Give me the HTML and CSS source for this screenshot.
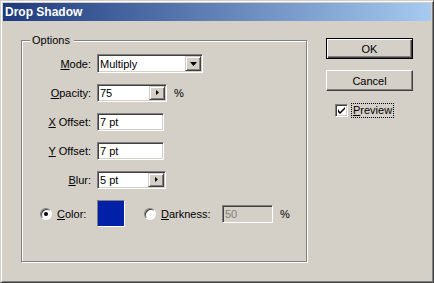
FILE: index.html
```html
<!DOCTYPE html>
<html lang="en">
<head>
  <meta charset="UTF-8">
  <title>Drop Shadow</title>
  <link rel="stylesheet" href="styles.css">
</head>
<body>
  <div class="window">
    <div class="titlebar">Drop Shadow</div>
    <div class="content">
      <fieldset class="group">
        <legend>Options</legend>
        <div class="row">
          <span class="label"><u>M</u>ode:</span>
          <div class="field select">
            <span>Multiply</span>
            <span class="mini drop"><svg width="7" height="4"><path d="M0 0h7L3.5 4z"/></svg></span>
          </div>
        </div>
        <div class="row">
          <span class="label"><u>O</u>pacity:</span>
          <div class="field w70">
            <span>75</span>
            <span class="mini spin"><svg width="3" height="5"><path d="M0 0v5l3-2.5z"/></svg></span>
          </div>
          <span class="unit">%</span>
        </div>
        <div class="row">
          <span class="label"><u>X</u> Offset:</span>
          <div class="field w67"><span>7 pt</span></div>
        </div>
        <div class="row">
          <span class="label"><u>Y</u> Offset:</span>
          <div class="field w67"><span>7 pt</span></div>
        </div>
        <div class="row">
          <span class="label"><u>B</u>lur:</span>
          <div class="field w69">
            <span>5 pt</span>
            <span class="mini spin"><svg width="3" height="5"><path d="M0 0v5l3-2.5z"/></svg></span>
          </div>
        </div>
        <div class="row color-row">
          <label class="opt color-opt"><span class="radio on"></span><span><u>C</u>olor:</span></label>
          <div class="swatch"></div>
          <label class="opt dark-opt"><span class="radio"></span><span><u>D</u>arkness:</span></label>
          <div class="field disabled w51"><span>50</span></div>
          <span class="unit">%</span>
        </div>
      </fieldset>
      <div class="buttons">
        <div class="btn default">OK</div>
        <div class="btn">Cancel</div>
        <label class="check">
          <span class="box"><svg width="7" height="7"><path d="M0 2v3l2 2 5-5V0L2 5z"/></svg></span>
          <span class="focus"><u>P</u>review</span>
        </label>
      </div>
    </div>
  </div>
</body>
</html>
```

FILE: styles.css
```css
body {
  margin: 0;
  background: #d4d0c8;
  font: 11px "Liberation Sans", Arial, sans-serif;
  color: #000;
}
.window {
  width: 434px;
  height: 283px;
  box-sizing: border-box;
  padding: 2px;
  background: #d4d0c8;
  border: 1px solid;
  border-color: #d4d0c8 #404040 #404040 #d4d0c8;
  box-shadow: inset 1px 1px #fff, inset -1px -1px #808080;
}
.titlebar {
  height: 18px;
  line-height: 18px;
  padding-left: 2px;
  background: linear-gradient(90deg, #1e3a7e, #a6caf0);
  color: #fff;
  font-weight: bold;
  font-size: 12px;
}
.content {
  display: flex;
  align-items: flex-start;
}
.group {
  margin: 13px 0 0 18px;
  padding: 2px 0 33px 0;
  width: 286px;
  box-sizing: border-box;
  min-width: 0;
  border: 1px solid #808080;
  box-shadow: 1px 1px #fff, inset 1px 1px #fff;
}
.group legend {
  margin-left: 8px;
  padding: 0 4px 0 2px;
  line-height: 13px;
  background: #d4d0c8;
}
.row {
  display: flex;
  align-items: center;
  height: 29px;
}
.label {
  width: 69px;
  margin-right: 6px;
  text-align: right;
}
.field {
  height: 18px;
  box-sizing: border-box;
  display: flex;
  align-items: center;
  padding-left: 2px;
  background: #fff;
  border: 1px solid;
  border-color: #808080 #fff #fff #808080;
  box-shadow: inset 1px 1px #404040, inset -1px -1px #d4d0c8;
}
.select {
  width: 106px;
  height: 19px;
}
.w70 { width: 70px; }
.w69 { width: 69px; }
.w67 { width: 67px; }
.w51 { width: 51px; }
.disabled {
  background: #d4d0c8;
  color: #808080;
}
.mini {
  margin-left: auto;
  margin-right: 1px;
  box-sizing: border-box;
  display: flex;
  align-items: center;
  justify-content: center;
  background: #d4d0c8;
  border: 1px solid;
  border-color: #d4d0c8 #404040 #404040 #d4d0c8;
  box-shadow: inset 1px 1px #fff, inset -1px -1px #808080;
}
.drop {
  width: 16px;
  height: 15px;
}
.spin {
  width: 16px;
  height: 14px;
}
.unit {
  margin-left: 7px;
}
.color-row {
  margin-top: 5px;
}
.opt {
  display: flex;
  align-items: center;
  gap: 5px;
}
.color-opt {
  width: 57px;
  margin-left: 18px;
}
.dark-opt {
  margin-left: 19px;
  width: 78px;
}
.radio {
  width: 12px;
  height: 12px;
  box-sizing: border-box;
  border-radius: 50%;
  background: #fff;
  border: 1px solid;
  border-color: #808080 #fff #fff #808080;
  box-shadow: inset 1px 1px #404040;
  display: flex;
  align-items: center;
  justify-content: center;
}
.radio.on::after {
  content: "";
  width: 4px;
  height: 4px;
  border-radius: 50%;
  background: #000;
}
.swatch {
  width: 28px;
  height: 27px;
  box-sizing: border-box;
  background: #0020a8;
  border: 1px solid;
  border-color: #808080 #fff #fff #808080;
}
.buttons {
  margin: 17px 0 0 19px;
  display: flex;
  flex-direction: column;
}
.btn {
  width: 87px;
  height: 21px;
  box-sizing: border-box;
  display: flex;
  align-items: center;
  justify-content: center;
  border: 1px solid;
  border-color: #fff #404040 #404040 #fff;
  box-shadow: inset -1px -1px #808080;
}
.btn.default {
  border-color: #000;
  box-shadow: inset 1px 1px #fff, inset -1px -1px #404040, inset -2px -2px #808080;
}
.btn + .btn {
  margin-top: 11px;
}
.check {
  margin: 13px 0 0 9px;
  display: flex;
  align-items: center;
}
.box {
  width: 13px;
  height: 13px;
  box-sizing: border-box;
  background: #fff;
  border: 1px solid;
  border-color: #808080 #fff #fff #808080;
  box-shadow: inset 1px 1px #404040, inset -1px -1px #d4d0c8;
  display: flex;
  align-items: center;
  justify-content: center;
}
.focus {
  margin-left: 4px;
  padding: 0 1px;
  line-height: 13px;
  outline: 1px dotted #000;
}
```
